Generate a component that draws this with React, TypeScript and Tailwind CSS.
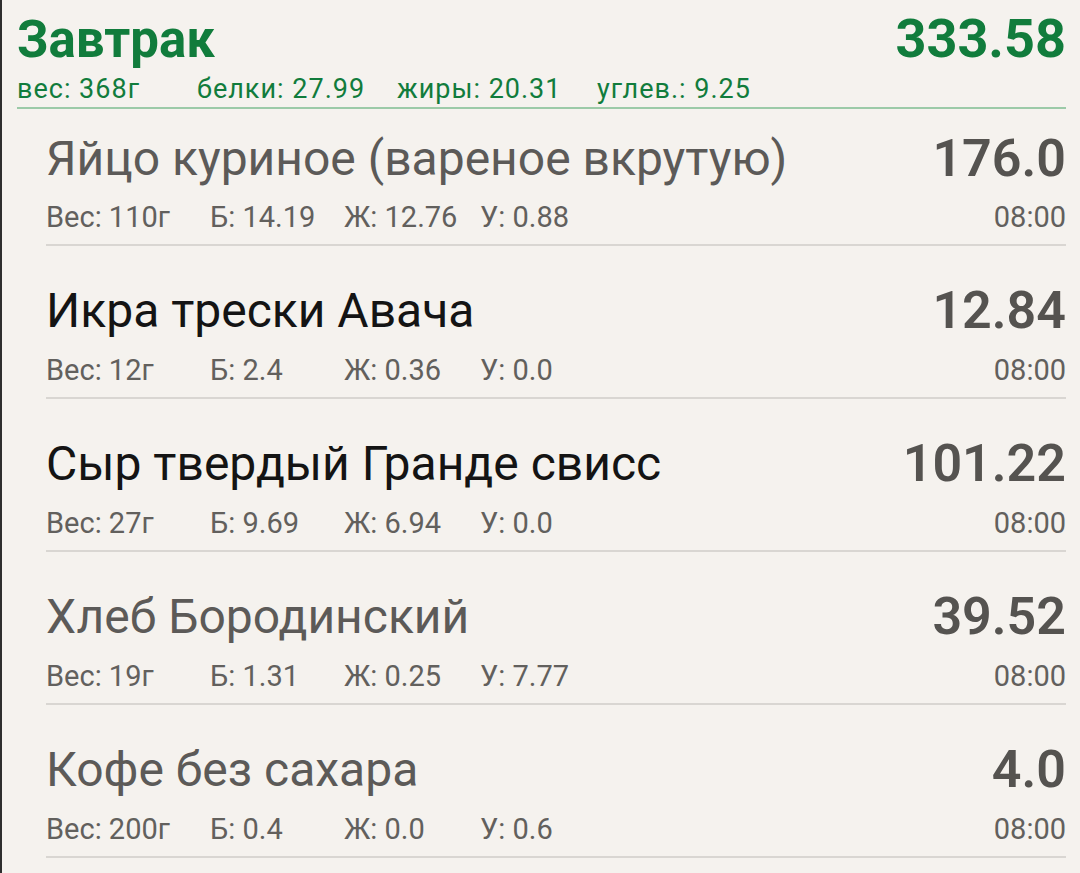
import React from "react";

type Item = {
  name: string;
  dark: boolean;
  kcal: string;
  w: string;
  b: string;
  j: string;
  u: string;
  time: string;
};

const items: Item[] = [
  { name: "Яйцо куриное (вареное вкрутую)", dark: false, kcal: "176.0", w: "110г", b: "14.19", j: "12.76", u: "0.88", time: "08:00" },
  { name: "Икра трески Авача", dark: true, kcal: "12.84", w: "12г", b: "2.4", j: "0.36", u: "0.0", time: "08:00" },
  { name: "Сыр твердый Гранде свисс", dark: true, kcal: "101.22", w: "27г", b: "9.69", j: "6.94", u: "0.0", time: "08:00" },
  { name: "Хлеб Бородинский", dark: false, kcal: "39.52", w: "19г", b: "1.31", j: "0.25", u: "7.77", time: "08:00" },
  { name: "Кофе без сахара", dark: false, kcal: "4.0", w: "200г", b: "0.4", j: "0.0", u: "0.6", time: "08:00" },
];

function Row({ it, first }: { it: Item; first: boolean }) {
  return (
    <div className={first ? "pt-[20px]" : "pt-[35px]"}>
      <div className="flex h-[60px] items-center justify-between">
        <span className={`text-[48px] leading-none ${it.dark ? "text-[#141414]" : "text-[#5c5a58]"}`}>{it.name}</span>
        <span className="text-[52px] font-semibold leading-none text-[#555350]">{it.kcal}</span>
      </div>
      <div className={`flex h-[40px] items-center text-[29px] leading-none text-[#62605d] ${first ? "mt-[8px]" : "mt-[9px]"}`}>
        <span className="w-[164px]">Вес: {it.w}</span>
        <span className="w-[134px]">Б: {it.b}</span>
        <span className="w-[136px]">Ж: {it.j}</span>
        <span className="flex-1">У: {it.u}</span>
        <span>{it.time}</span>
      </div>
      <div className="mt-[7px] h-[2px] bg-[#d9d6d2]" />
    </div>
  );
}

export default function App() {
  return (
    <div
      className="h-[873px] w-[1080px] overflow-hidden border-l-2 border-[#2e2e2e] bg-[#f5f2ee]"
      style={{ fontFamily: "Roboto, 'Noto Sans', sans-serif" }}
    >
      <div className="pl-[15px] pr-[14px] pt-[11px]">
        <div className="flex h-[56px] items-center justify-between font-bold leading-none text-[#117c3c]">
          <span className="text-[51px]">Завтрак</span>
          <span className="text-[54px]">333.58</span>
        </div>
        <div className="mt-[7px] flex h-[30px] items-center text-[27px] leading-none tracking-[1px] text-[#117c3c]">
          <span className="w-[180px]">вес: 368г</span>
          <span className="w-[200px]">белки: 27.99</span>
          <span className="w-[200px]">жиры: 20.31</span>
          <span>углев.: 9.25</span>
        </div>
        <div className="mt-[3px] h-[2px] bg-[#9ccaa8]" />
      </div>
      <div className="pl-[44px] pr-[14px]">
        {items.map((it, i) => (
          <Row key={i} it={it} first={i === 0} />
        ))}
      </div>
    </div>
  );
}
